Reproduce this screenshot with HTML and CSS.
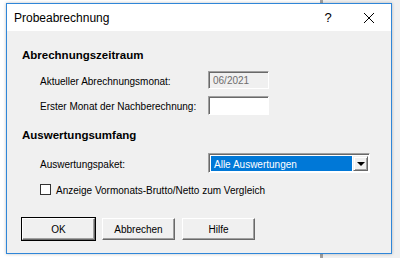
FILE: index.html
```html
<!DOCTYPE html>
<html lang="de">
  <head>
    <meta charset="UTF-8" />
    <meta name="viewport" content="width=device-width, initial-scale=1.0" />
    <title>Probeabrechnung</title>
    <link rel="stylesheet" href="styles.css">
  </head>
  <body>
    <div class="dialog">
      <div class="titlebar">
        <span class="title">Probeabrechnung</span>
        <span class="help-btn">?</span>
        <span class="close-btn">
          <svg width="12" height="12" viewBox="0 0 12 12">
            <path d="M1 1 L11 11 M11 1 L1 11" stroke="#000" stroke-width="1" fill="none" />
          </svg>
        </span>
      </div>
      <div class="content">
        <div class="heading">Abrechnungszeitraum</div>
        <div class="row row-first">
          <span class="label">Aktueller Abrechnungsmonat:</span>
          <div class="field field-disabled">06/2021</div>
        </div>
        <div class="row row-second">
          <span class="label">Erster Monat der Nachberechnung:</span>
          <div class="field"></div>
        </div>

        <div class="heading heading-second">Auswertungsumfang</div>
        <div class="row row-combo">
          <span class="label">Auswertungspaket:</span>
          <div class="combo">
            <div class="combo-value">Alle Auswertungen</div>
            <div class="combo-arrow"><span class="triangle"></span></div>
          </div>
        </div>
        <div class="check-row">
          <span class="checkbox"></span>
          <span class="check-label">Anzeige Vormonats-Brutto/Netto zum Vergleich</span>
        </div>

        <div class="buttons">
          <div class="btn btn-default">OK</div>
          <div class="btn">Abbrechen</div>
          <div class="btn">Hilfe</div>
        </div>
      </div>
    </div>
  </body>
</html>
```

FILE: styles.css
```css
* {
  padding: 0;
  margin: 0;
  box-sizing: border-box;
}
html,
body {
  width: 100%;
  height: 100%;
}
body {
  font-family: "Liberation Sans", Arial, sans-serif;
  font-size: 10px;
  color: #000;
  overflow: hidden;
  white-space: nowrap;
  background: linear-gradient(to right, #fff 0, #fff 320px, #a0a0a0 320px, #a0a0a0 323px, #f0f0f0 323px);
}
.dialog {
  margin: 3px 0 0 6px;
  width: 386px;
  height: 251px;
  border: 1px solid #2f86d8;
  background: #f0f0f0;
  box-shadow: 0 0 3px rgba(0, 0, 0, 0.25);
  display: flex;
  flex-direction: column;
}
.titlebar {
  height: 27px;
  background: #fff;
  display: flex;
  align-items: center;
  padding-left: 7px;
}
.title {
  font-size: 12px;
  flex: 1;
  padding-top: 1px;
}
.help-btn {
  font-size: 13px;
  width: 46px;
  text-align: center;
  margin-right: -2px;
}
.close-btn {
  width: 40px;
  display: flex;
  justify-content: center;
  align-items: center;
  margin-right: 2px;
}
.content {
  flex: 1;
  padding: 17px 15px 0 15px;
}
.heading {
  font-weight: bold;
  height: 14px;
  line-height: 14px;
  font-size: 11.5px;
  margin-bottom: 9px;
}
.heading-second {
  margin-top: 13px;
  margin-bottom: 11px;
}
.row {
  display: flex;
  align-items: center;
  padding-left: 18px;
}
.row-first {
  height: 18px;
  margin-bottom: 7px;
}
.row-second {
  height: 19px;
}
.row-combo {
  height: 20px;
}
.label {
  width: 168px;
  padding-top: 2px;
}
.field {
  width: 61px;
  height: 100%;
  background: #fff;
  border: 1px solid;
  border-color: #a0a0a0 #fff #fff #a0a0a0;
  box-shadow: inset 1px 1px 0 #696969;
  padding: 3px 0 0 4px;
}
.field-disabled {
  background: #f0f0f0;
  color: #6d6d6d;
}
.combo {
  width: 162px;
  height: 100%;
  display: flex;
  background: #fff;
  border: 1px solid;
  border-color: #a0a0a0 #fff #fff #a0a0a0;
  box-shadow: inset 1px 1px 0 #696969;
  padding: 2px 1px 1px 2px;
}
.combo-value {
  flex: 1;
  background: #0078d7;
  color: #fff;
  padding: 3px 0 0 3px;
  margin-right: 1px;
}
.combo-arrow {
  width: 15px;
  background: #f0f0f0;
  border: 1px solid;
  border-color: #f0f0f0 #696969 #696969 #f0f0f0;
  box-shadow: inset 1px 1px 0 #fff, inset -1px -1px 0 #a0a0a0;
  display: flex;
  justify-content: center;
  align-items: center;
}
.triangle {
  width: 0;
  height: 0;
  border-left: 4px solid transparent;
  border-right: 4px solid transparent;
  border-top: 4px solid #000;
  margin-top: 1px;
}
.check-row {
  display: flex;
  align-items: center;
  padding-left: 18px;
  margin-top: 10px;
  height: 13px;
}
.checkbox {
  width: 11px;
  height: 11px;
  background: #fff;
  border: 1px solid #333;
  margin-right: 5px;
}
.check-label {
  padding-top: 1px;
}
.buttons {
  display: flex;
  gap: 7px;
  margin-top: 22px;
}
.btn {
  width: 73px;
  height: 22px;
  display: flex;
  align-items: center;
  justify-content: center;
  background: #f0f0f0;
  border: 1px solid;
  border-color: #fff #696969 #696969 #fff;
  box-shadow: inset -1px -1px 0 #a0a0a0;
}
.btn-default {
  outline: 1px solid #000;
}
```
